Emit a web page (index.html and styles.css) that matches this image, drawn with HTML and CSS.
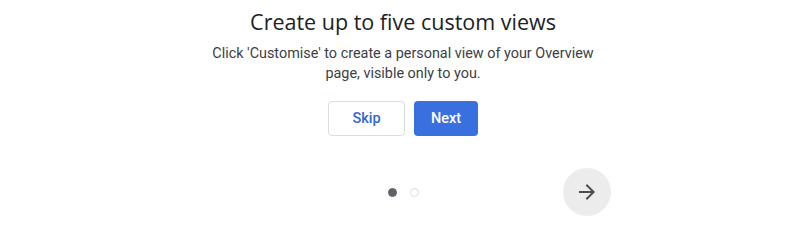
FILE: index.html
```html
<!DOCTYPE html>
<html>
<head>
<meta charset="utf-8">
<link rel="stylesheet" href="styles.css">
</head>
<body>
<main class="panel">
  <h1 class="title">Create up to five custom views</h1>
  <p class="desc">Click 'Customise' to create a personal view of your Overview<br>page, visible only to you.</p>
  <div class="actions">
    <button class="btn btn-outline">Skip</button>
    <button class="btn btn-primary">Next</button>
  </div>
  <div class="footer">
    <div class="spacer"></div>
    <div class="dots">
      <span class="dot dot-active"></span>
      <span class="dot"></span>
    </div>
    <div class="nav">
      <button class="arrow-btn" aria-label="Next">
        <svg width="24" height="24" viewBox="0 0 24 24"><path d="M12 4l-1.41 1.41L16.17 11H4v2h12.17l-5.58 5.59L12 20l8-8z" fill="#4a4d51"/></svg>
      </button>
    </div>
  </div>
</main>
</body>
</html>
```
FILE: styles.css
```css
html, body {
  margin: 0;
  padding: 0;
  background: #ffffff;
}
.panel {
  width: 800px;
  padding-left: 6px;
  box-sizing: border-box;
  display: flex;
  flex-direction: column;
  align-items: center;
}
.title {
  margin: 8px 0 0;
  font-family: "Open Sans", sans-serif;
  font-weight: 400;
  font-size: 21.5px;
  line-height: 28px;
  color: #202124;
}
.desc {
  margin: 8px 0 0;
  font-family: Roboto, sans-serif;
  font-size: 14.4px;
  line-height: 20px;
  color: #3c4043;
  text-align: center;
}
.actions {
  display: flex;
  gap: 9px;
  margin-top: 17px;
}
.btn {
  height: 35px;
  border-radius: 4px;
  font-family: Roboto, sans-serif;
  font-weight: 500;
  font-size: 14.5px;
  cursor: pointer;
}
.btn-outline {
  width: 77px;
  background: #fff;
  border: 1px solid #dadce0;
  color: #3367d6;
}
.btn-primary {
  width: 64px;
  background: #3a6fe0;
  border: none;
  color: #fff;
}
.footer {
  width: 416px;
  display: grid;
  grid-template-columns: 1fr auto 1fr;
  align-items: center;
  margin-top: 32px;
}
.dots {
  display: flex;
  gap: 13px;
}
.dot {
  width: 9px;
  height: 9px;
  box-sizing: border-box;
  border-radius: 50%;
  border: 1.5px solid #dadce0;
}
.dot-active {
  background: #5f6368;
  border-color: #5f6368;
}
.nav {
  display: flex;
  justify-content: flex-end;
}
.arrow-btn {
  width: 48px;
  height: 48px;
  border-radius: 50%;
  border: none;
  background: #ececec;
  display: flex;
  align-items: center;
  justify-content: center;
  padding: 0;
}
```
